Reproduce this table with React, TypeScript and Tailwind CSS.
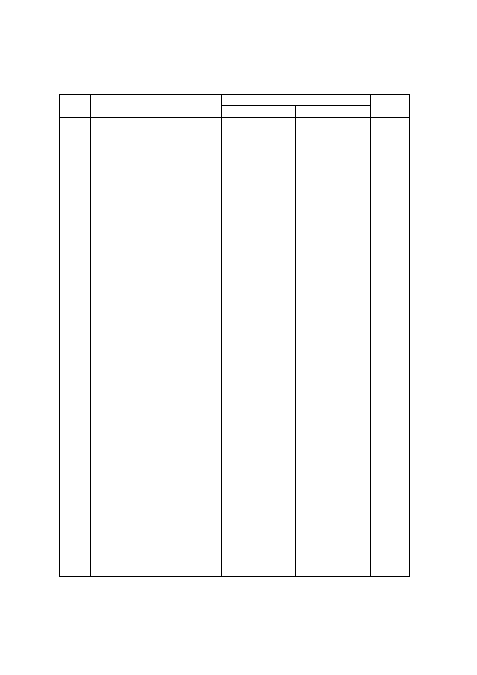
export default function App() {
  return (
    <div className="min-h-[675px] w-[477px] bg-white pl-[59px] pt-[94px]">
      <table className="w-[350px] table-fixed border-collapse border border-black">
        <colgroup>
          <col className="w-[31px]" />
          <col className="w-[131px]" />
          <col className="w-[74px]" />
          <col className="w-[75px]" />
          <col className="w-[39px]" />
        </colgroup>
        <thead>
          <tr className="h-[11px]">
            <th rowSpan={2} className="border border-black p-0" />
            <th rowSpan={2} className="border border-black p-0" />
            <th colSpan={2} className="border border-black p-0" />
            <th rowSpan={2} className="border border-black p-0" />
          </tr>
          <tr className="h-[12px]">
            <th className="border border-black p-0" />
            <th className="border border-black p-0" />
          </tr>
        </thead>
        <tbody>
          <tr className="h-[459px]">
            <td className="border border-black p-0" />
            <td className="border border-black p-0" />
            <td className="border border-black p-0" />
            <td className="border border-black p-0" />
            <td className="border border-black p-0" />
          </tr>
        </tbody>
      </table>
    </div>
  )
}
